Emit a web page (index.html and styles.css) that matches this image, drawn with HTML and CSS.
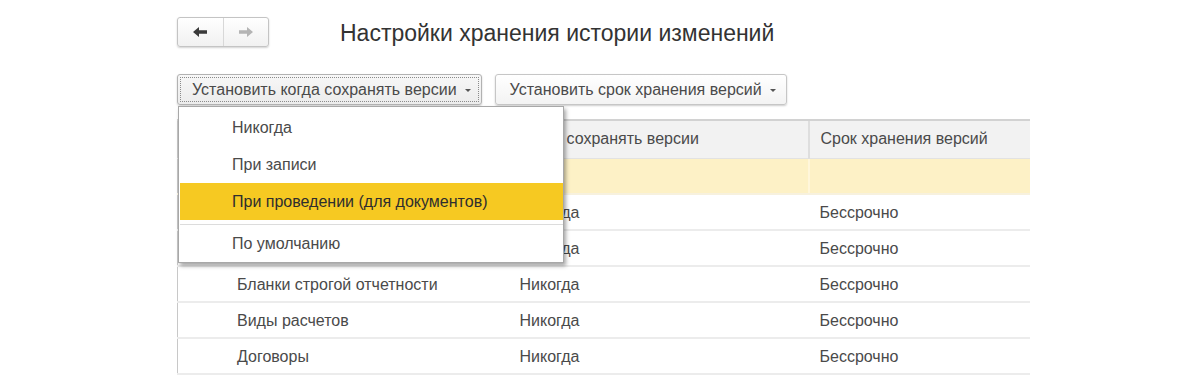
FILE: index.html
```html
<!DOCTYPE html>
<html lang="ru">
<head>
<meta charset="utf-8">
<title>Настройки хранения истории изменений</title>
<link rel="stylesheet" href="styles.css">
</head>
<body>
<div class="page">
  <div class="topbar">
    <div class="nav">
      <button class="nav-btn back" aria-label="Назад">
        <svg width="16" height="12" viewBox="0 0 16 12"><path d="M1 6 L7 1 V4.2 H15 V7.8 H7 V11 Z" fill="#3a3a3a"/></svg>
      </button>
      <button class="nav-btn fwd" aria-label="Вперёд">
        <svg width="16" height="12" viewBox="0 0 16 12"><path d="M15 6 L9 1 V4.2 H1 V7.8 H9 V11 Z" fill="#b4b4b4"/></svg>
      </button>
    </div>
    <h1 class="title">Настройки хранения истории изменений</h1>
  </div>

  <div class="toolbar">
    <button class="btn focused"><span class="btn-inner">Установить когда сохранять версии <span class="caret"></span></span></button>
    <button class="btn"><span class="btn-inner">Установить срок хранения версий <span class="caret"></span></span></button>
  </div>

  <div class="content">
    <table class="grid">
      <colgroup>
        <col class="c1"><col class="c2"><col class="c3">
      </colgroup>
      <thead>
        <tr><th class="t1"></th><th class="t2">Когда сохранять версии</th><th class="t3">Срок хранения версий</th></tr>
      </thead>
      <tbody>
        <tr class="sel"><td class="t1"></td><td class="t2"></td><td class="t3"></td></tr>
        <tr><td class="t1"></td><td class="t2">Никогда</td><td class="t3">Бессрочно</td></tr>
        <tr><td class="t1"></td><td class="t2">Никогда</td><td class="t3">Бессрочно</td></tr>
        <tr><td class="t1">Бланки строгой отчетности</td><td class="t2">Никогда</td><td class="t3">Бессрочно</td></tr>
        <tr><td class="t1">Виды расчетов</td><td class="t2">Никогда</td><td class="t3">Бессрочно</td></tr>
        <tr><td class="t1">Договоры</td><td class="t2">Никогда</td><td class="t3">Бессрочно</td></tr>
      </tbody>
    </table>

    <ul class="menu">
      <li class="item">Никогда</li>
      <li class="item">При записи</li>
      <li class="item active">При проведении (для документов)</li>
      <li class="sep"></li>
      <li class="item">По умолчанию</li>
    </ul>
  </div>
</div>
</body>
</html>
```

FILE: styles.css
```css
* { box-sizing: border-box; }
html, body { margin: 0; padding: 0; background: #fff; }
body {
  font-family: "Liberation Sans", Arial, sans-serif;
  color: #4a4a4a;
  width: 1200px;
  height: 381px;
  overflow: hidden;
}
.page { padding: 17px 0 0 177px; }

.topbar { display: flex; align-items: center; height: 30px; }
.nav {
  display: flex;
  width: 92px;
  height: 30px;
  border: 1px solid #c4c4c4;
  border-radius: 3px;
  background: linear-gradient(#ffffff, #f1f1f1);
  box-shadow: 0 1px 2px rgba(0,0,0,0.18);
}
.nav-btn {
  flex: 1;
  border: 0;
  background: transparent;
  padding: 0;
  display: flex;
  align-items: center;
  justify-content: center;
}
.nav-btn.back { border-right: 1px solid #d8d8d8; }
.title {
  margin: 0 0 0 71px;
  font-size: 23px;
  font-weight: normal;
  color: #333;
  padding-top: 2px;
}

.toolbar { display: flex; gap: 13px; margin-top: 27px; height: 31px; }
.btn {
  font-family: inherit;
  font-size: 16px;
  color: #4a4a4a;
  height: 31px;
  padding: 2px;
  border: 1px solid #c6c6c6;
  border-radius: 3px;
  background: linear-gradient(#ffffff, #f3f3f3);
  box-shadow: 0 1px 2px rgba(0,0,0,0.2);
}
.btn-inner {
  display: flex;
  align-items: center;
  height: 100%;
  padding: 0 7px 0 11px;
  border: 1px dotted transparent;
  gap: 8px;
}
.btn.focused { background: linear-gradient(#f7f7f7, #ececec); border-color: #b2b2b2; }
.btn.focused .btn-inner { border-color: #8a8a8a; }
.caret {
  width: 0; height: 0;
  border-left: 3px solid transparent;
  border-right: 3px solid transparent;
  border-top: 3px solid #555;
  margin-top: 1px;
}

.content { position: relative; margin-top: 14px; }
.grid {
  border-collapse: collapse;
  width: 852px;
  font-size: 16px;
  table-layout: fixed;
  border-left: 1px solid #c8c8c8;
}
.c1 { width: 330px; }
.c2 { width: 301px; }
.c3 { width: 221px; }
.grid th {
  font-weight: normal;
  text-align: left;
  background: #f2f2f2;
  height: 38px;
  padding-top: 1px;
  border-top: 2px solid #d2d2d2;
  border-bottom: 1px solid #e2e2e2;
  color: #4a4a4a;
}
.grid th + th { border-left: 2px solid #dedede; }
.grid td {
  height: 36px;
  padding-top: 3px;
  border-bottom: 2px solid #ececec;
  color: #4a4a4a;
  white-space: nowrap;
}
.t1 { padding-left: 59px; }
.t2 { padding-left: 12px; }
.t3 { padding-left: 11px; }
.grid tr.sel td { background: #fdf1c6; border-bottom-color: #f7f1de; }
.grid tr.sel td + td { border-left: 2px solid #fff6da; }

.menu {
  position: absolute;
  top: -13px;
  left: 1px;
  width: 386px;
  margin: 0;
  padding: 2px 0 0;
  list-style: none;
  background: #fff;
  border: 1px solid #a8a8a8;
  box-shadow: 2px 3px 4px rgba(0,0,0,0.35);
  font-size: 16px;
}
.item {
  height: 37px;
  line-height: 37px;
  padding-left: 53px;
  color: #4a4a4a;
}
.item.active { background: #f6c922; color: #2e2e2e; margin: 0 0 0 1px; padding-left: 52px; }
.sep { height: 5px; border-bottom: 1px solid #dcdcdc; margin: 0 0 0 1px; }
```
